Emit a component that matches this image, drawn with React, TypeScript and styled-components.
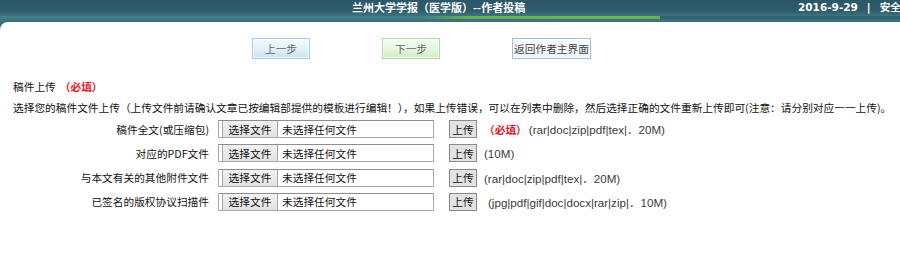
import React from "react";
import styled, { createGlobalStyle } from "styled-components";

const Global = createGlobalStyle`
  html, body { margin: 0; padding: 0; background: #fff; }
  body {
    font-family: "Liberation Sans", "Noto Sans CJK SC", sans-serif;
    font-size: 10.7px;
    color: #111;
    overflow: hidden;
  }
`;

const Page = styled.div`
  width: 900px;
  height: 276px;
  background: #3a7280;
  display: flex;
  flex-direction: column;
  overflow: hidden;
`;

const TopBar = styled.div`
  height: 15px;
  background: linear-gradient(to bottom, #2b5868 0, #2e5c6c 11px, #3b6f7d 15px);
  display: flex;
  align-items: center;
  color: #fff;
  font-weight: bold;
  font-size: 11px;
  white-space: nowrap;
`;

const Title = styled.div`
  padding-left: 352px;
  flex: 1;
  line-height: 15px;
  font-family: "Noto Sans CJK SC", sans-serif;
`;

const DateBox = styled.div`
  width: 102px;
  line-height: 15px;
  display: flex;
  gap: 9px;
  font-family: "DejaVu Sans", "Noto Sans CJK SC", sans-serif;
  font-size: 10.5px;
`;

const Strip = styled.div`
  height: 3px;
  background: linear-gradient(to right, #3f7e85 0, #3f7e85 420px, #6ab349 470px, #6cb545 660px, #2f6273 660px, #2f6273 100%);
  border-bottom: 1px solid #3a7280;
  margin-top: 1px;
`;

const Panel = styled.div`
  flex: 1;
  background: #fff;
  border-top-left-radius: 8px;
  margin-top: 2px;
  display: flex;
  flex-direction: column;
`;

const ButtonBar = styled.div`
  display: flex;
  padding-left: 252px;
  gap: 72px;
  margin-top: 16px;
`;

const NavButton = styled.div<{ $tone: "blue" | "green" | "plain"; $w: number }>`
  width: ${(p) => p.$w}px;
  height: 21px;
  box-sizing: border-box;
  display: flex;
  align-items: center;
  justify-content: center;
  white-space: nowrap;
  font-size: 10.7px;
  font-family: "Noto Sans CJK SC", sans-serif;
  color: ${(p) => (p.$tone === "plain" ? "#444" : "#666")};
  border: 1px solid
    ${(p) => (p.$tone === "green" ? "#a9dca0" : p.$tone === "blue" ? "#a4cde6" : "#9cc3dd")};
  background: ${(p) =>
    p.$tone === "green"
      ? "linear-gradient(to bottom, #f6fcf3 0%, #e6f6df 50%, #cdeec2 100%)"
      : p.$tone === "blue"
      ? "linear-gradient(to bottom, #f4f9fd 0%, #e3f0f9 50%, #c9e3f4 100%)"
      : "linear-gradient(to bottom, #fafcfe 0%, #eef5fb 100%)"};
  box-shadow: inset 0 0 0 1px rgba(255, 255, 255, 0.7);
`;

const Section = styled.div`
  padding-left: 13px;
  margin-top: 17px;
  font-family: "Noto Sans CJK SC", sans-serif;
`;

const Line = styled.div`
  height: 21px;
  line-height: 21px;
  white-space: nowrap;
`;

const Required = styled.span`
  color: #e8141c;
  font-weight: bold;
  margin-left: 4px;
`;

const Rows = styled.div`
  display: flex;
  flex-direction: column;
  gap: 6.3px;
  margin-top: 2px;
`;

const Row = styled.div`
  display: grid;
  grid-template-columns: 210px 216px 28px auto;
  column-gap: 8px;
  align-items: center;
  height: 18px;
  font-family: "Noto Sans CJK SC", sans-serif;
`;

const Label = styled.div`
  text-align: right;
  white-space: nowrap;
  color: #111;
  padding-right: 1px;
`;

const FileBox = styled.div`
  height: 18px;
  box-sizing: border-box;
  border: 1px solid #a8a8a8;
  border-top-color: #8e8e8e;
  display: flex;
  align-items: center;
  background: #fff;
  padding-left: 3px;
  white-space: nowrap;
`;

const PickButton = styled.div`
  height: 16px;
  box-sizing: border-box;
  width: 56px;
  border: 1px solid #a6a6a6;
  border-top: none;
  border-bottom: none;
  background: linear-gradient(to bottom, #f2f2f2, #e2e2e2);
  display: flex;
  align-items: center;
  justify-content: center;
  color: #111;
`;

const NoFile = styled.span`
  margin-left: 4px;
  color: #111;
`;

const UploadButton = styled.div`
  height: 18px;
  width: 28px;
  box-sizing: border-box;
  margin-left: 7px;
  border: 1px solid #8a8a8a;
  background: #e3e3e3;
  display: flex;
  align-items: center;
  justify-content: center;
  color: #111;
`;

const Hint = styled.div<{ $lead?: boolean }>`
  white-space: nowrap;
  color: #3a3a3a;
  margin-left: ${(p) => (p.$lead ? 10 : 6)}px;
  display: flex;
  align-items: center;
  font-family: "Liberation Sans", "Noto Sans CJK SC", sans-serif;
  font-size: 11.6px;
`;

const HintRequired = styled.span`
  color: #e8141c;
  font-weight: bold;
  margin-right: 2px;
  font-size: 10.7px;
  font-family: "Noto Sans CJK SC", sans-serif;
`;

type RowData = { label: string; required?: boolean; hint: string; lead?: boolean };

const rows: RowData[] = [
  { label: "稿件全文(或压缩包)", required: true, hint: "(rar|doc|zip|pdf|tex|．20M)" },
  { label: "对应的PDF文件", hint: "(10M)" },
  { label: "与本文有关的其他附件文件", hint: "(rar|doc|zip|pdf|tex|．20M)" },
  { label: "已签名的版权协议扫描件", hint: "(jpg|pdf|gif|doc|docx|rar|zip|．10M)", lead: true },
];

export default function App() {
  return (
    <Page>
      <Global />
      <TopBar>
        <Title>兰州大学学报（医学版）--作者投稿</Title>
        <DateBox>
          <span>2016-9-29</span>
          <span>|</span>
          <span>安全</span>
        </DateBox>
      </TopBar>
      <Strip />
      <Panel>
        <ButtonBar>
          <NavButton $tone="blue" $w={58}>上一步</NavButton>
          <NavButton $tone="green" $w={58}>下一步</NavButton>
          <NavButton $tone="plain" $w={79}>返回作者主界面</NavButton>
        </ButtonBar>
        <Section>
          <Line>
            稿件上传<Required>（必填）</Required>
          </Line>
          <Line>
            选择您的稿件文件上传（上传文件前请确认文章已按编辑部提供的模板进行编辑！），如果上传错误，可以在列表中删除，然后选择正确的文件重新上传即可(注意：请分别对应一一上传)。
          </Line>
        </Section>
        <Rows>
          {rows.map((r) => (
            <Row key={r.label}>
              <Label>{r.label}</Label>
              <FileBox>
                <PickButton>选择文件</PickButton>
                <NoFile>未选择任何文件</NoFile>
              </FileBox>
              <UploadButton>上传</UploadButton>
              <Hint $lead={r.lead}>
                {r.required && <HintRequired>（必填）</HintRequired>}
                {r.hint}
              </Hint>
            </Row>
          ))}
        </Rows>
      </Panel>
    </Page>
  );
}
